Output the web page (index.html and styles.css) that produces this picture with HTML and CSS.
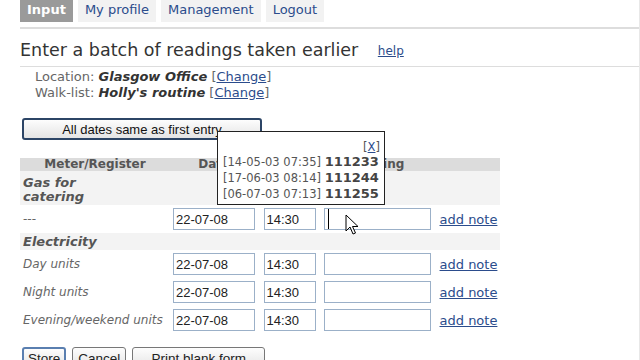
FILE: index.html
```html
<!DOCTYPE html>
<html>
  <head>
    <meta http-equiv="Content-Type" content="text/html; charset=utf-8">
    <link rel="stylesheet" href="styles.css">
  </head>
  <body>
    <div class="page">
      <ul class="tabs">
        <li class="on">Input</li>
        <li><a href="#">My profile</a></li>
        <li><a href="#">Management</a></li>
        <li><a href="#">Logout</a></li>
      </ul>
      <h1>Enter a batch of readings taken earlier <a class="help" href="#">help</a></h1>
      <div class="info">
        <div>Location: <b>Glasgow Office</b> [<a href="#">Change</a>]</div>
        <div>Walk-list: <b>Holly's routine</b> [<a href="#">Change</a>]</div>
      </div>
      <button class="same">All dates same as first entry</button>
      <table class="readings">
        <tr class="head"><th class="c1">Meter/Register</th><th>Date</th><th>Time</th><th>Reading</th><th></th></tr>
        <tr class="cat gas"><td><i class="wrap">Gas for catering</i></td><td colspan="4"></td></tr>
        <tr><td class="lbl">---</td><td><input class="d" value="22-07-08"></td><td><input class="t" value="14:30"></td><td><input class="r active" value=""></td><td><a href="#">add note</a></td></tr>
        <tr class="cat"><td><i>Electricity</i></td><td colspan="4"></td></tr>
        <tr><td class="lbl"><i>Day units</i></td><td><input class="d" value="22-07-08"></td><td><input class="t" value="14:30"></td><td><input class="r" value=""></td><td><a href="#">add note</a></td></tr>
        <tr><td class="lbl"><i>Night units</i></td><td><input class="d" value="22-07-08"></td><td><input class="t" value="14:30"></td><td><input class="r" value=""></td><td><a href="#">add note</a></td></tr>
        <tr><td class="lbl"><i>Evening/weekend units</i></td><td><input class="d" value="22-07-08"></td><td><input class="t" value="14:30"></td><td><input class="r" value=""></td><td><a href="#">add note</a></td></tr>
      </table>
      <div class="actions">
        <button class="def">Store</button>
        <button>Cancel</button>
        <button class="wide">Print blank form</button>
      </div>
    </div>
    <div class="popup">
      <div class="close">[<a href="#">X</a>]</div>
      <div>[14-05-03 07:35] <b>111233</b></div>
      <div>[17-06-03 08:14] <b>111244</b></div>
      <div>[06-07-03 07:13] <b>111255</b></div>
    </div>
    <svg class="pointer" width="14" height="22" viewBox="0 0 14 22">
      <path d="M1 1 L1 17 L5 13 L8 20 L10.5 19 L7.5 12.5 L13 12.5 Z" fill="#fff" stroke="#000" stroke-width="1" stroke-linejoin="round"/>
    </svg>
  </body>
</html>
```

FILE: styles.css
```css
html, body { margin: 0; width: 640px; height: 360px; overflow: hidden; background: #fff; }
body { font-family: "DejaVu Sans", Verdana, sans-serif; font-size: 13px; color: #444; position: relative; }
a { color: #2b4c8c; }

.page { margin-left: 20px; border-right: 1px solid #e8e8e8; height: 360px; }

.tabs { list-style: none; margin: 0; padding: 0 0 5px 0; display: flex; gap: 5px; border-bottom: 2px solid #ddd; }
.tabs li { background: #f2f2f2; padding: 2px 7px 4px 7px; line-height: 16px; }
.tabs li a { color: #2b4c8c; text-decoration: none; }
.tabs li.on { background: #9a9a9a; color: #fff; font-weight: bold; }

h1 { font-size: 17.5px; font-weight: normal; color: #333; margin: 0; padding: 11px 0 6px 0; border-bottom: 1px solid #ddd; }
h1 .help { font-size: 12px; margin-left: 14px; vertical-align: 1px; }

.info { padding: 2px 0 0 15px; color: #666; line-height: 16px; }
.info b { font-style: italic; color: #333; }

.same { display: block; margin: 17px 0 0 2px; width: 240px; height: 22px; font-family: "Liberation Sans", Arial, sans-serif; font-size: 13px; color: #111; background: linear-gradient(#fdfdfd, #e4e4e4); border: 2px solid #2c4566; border-radius: 3px; padding: 0; }

.readings { border-collapse: collapse; margin-top: 18px; width: 480px; font-size: 12px; }
.readings th { background: #dcdcdc; color: #555; height: 13px; line-height: 13px; padding: 0; text-align: center; }
.readings th.c1 { width: 150px; }
.readings td { padding: 0; height: 28px; }
.readings tr.cat td { background: #f3f3f3; font-weight: bold; color: #555; padding: 2px 3px 1px 3px; height: auto; line-height: 14px; vertical-align: top; font-size: 13px; }
.readings tr.gas td { padding: 5px 3px 1px 3px; }
.wrap { display: block; width: 100px; }
.lbl { padding-left: 3px !important; color: #666; white-space: nowrap; font-size: 12px; }
.readings td a { margin-left: 4px; font-size: 13px; }

input { font-family: "Liberation Sans", Arial, sans-serif; font-size: 13px; color: #222; border: 1px solid #9bb0c8; height: 22px; padding: 0 2px; box-sizing: border-box; margin: 0; vertical-align: middle; }
input.d { width: 82px; margin-left: 3px; }
input.t { width: 52px; margin-left: 5px; }
input.r { width: 107px; margin-left: 6px; }
input.active { box-shadow: inset 3px 0 0 #fff, inset 4px 0 0 #000; }

.actions { margin-top: 13px; display: flex; gap: 6px; padding-left: 2px; }
.actions button { font-family: "Liberation Sans", Arial, sans-serif; font-size: 13.5px; color: #222; background: linear-gradient(#fdfdfd, #e4e4e4); border: 1px solid #777; border-radius: 3px; padding: 1px 5px; height: 22px; }
.actions button.def { border: 2px solid #5a7fb0; padding: 0 4px; }
.actions button.wide { width: 133px; }

.popup { position: absolute; left: 217px; top: 131px; width: 168px; height: 74px; background: #fff; border: 1px solid #222; font-size: 11.5px; color: #555; line-height: 16px; padding: 0 4px 0 5px; box-sizing: border-box; white-space: nowrap; }
.popup .close { text-align: right; margin-top: 8px; line-height: 14px; margin-bottom: 0; }
.popup b { font-size: 13px; color: #444; }

.pointer { position: absolute; left: 345px; top: 214px; }
```
